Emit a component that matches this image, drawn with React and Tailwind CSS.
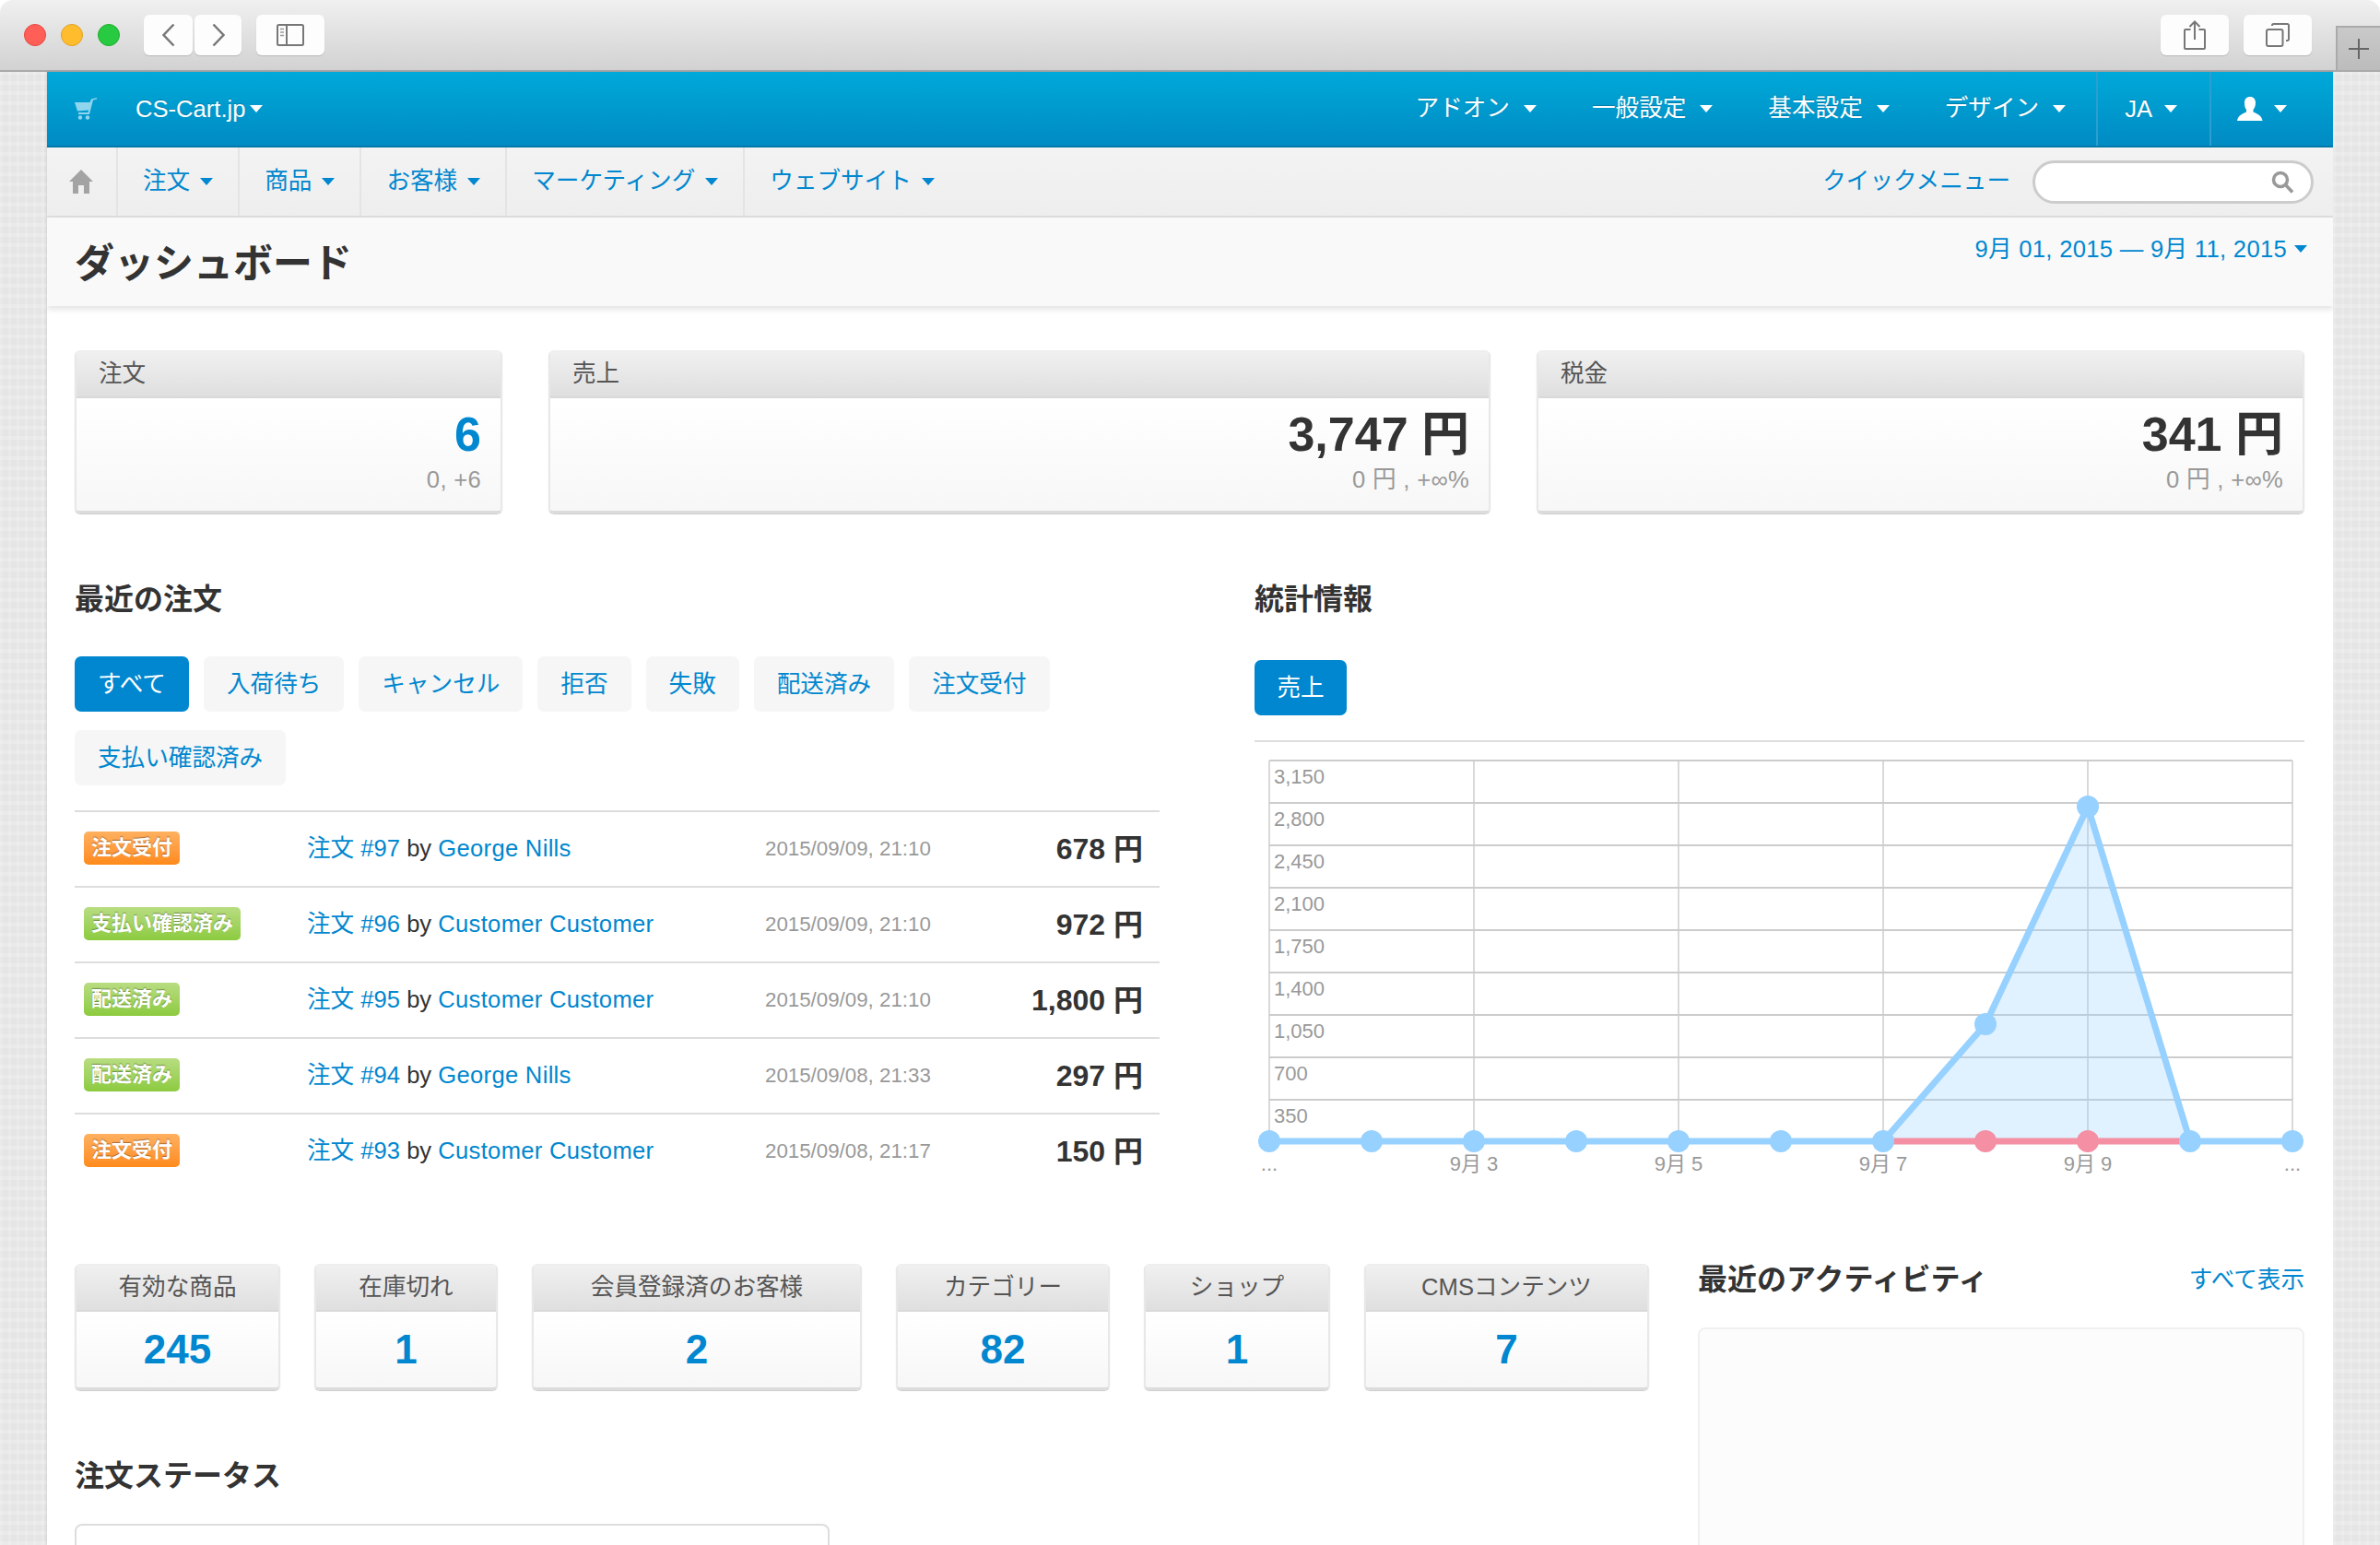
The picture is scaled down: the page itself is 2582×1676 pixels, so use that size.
import React from 'react';

const Caret = () => <span className="inline-block w-0 h-0 border-x-[7px] border-x-transparent border-t-[8px] border-t-current" />;

const sideBg = "w-[51px] shrink-0 bg-[#e5e5e5] bg-[repeating-linear-gradient(0deg,rgba(255,255,255,.2)_0_4px,transparent_4px_11px),repeating-linear-gradient(90deg,rgba(255,255,255,.16)_0_3px,transparent_3px_9px)]";

const ChromeBtn = ({ className = '', children }) => (
  <div className={`h-[44px] flex items-center justify-center rounded-[6px] bg-[#fdfdfd] shadow-[0_1px_1px_rgba(0,0,0,.15)] ${className}`}>
    {children}
  </div>
);

const TopItem = ({ label }) => (
  <div className="flex items-center gap-[15px]">
    <span className="-mt-[3px]">{label}</span>
    <Caret />
  </div>
);

const NavItem = ({ label }) => (
  <div className="flex items-center gap-[11px] px-[27px] h-full border-r-2 border-[#e4e4e4] text-[#0087cf]">
    <span className="-mt-[2px]">{label}</span>
    <Caret />
  </div>
);

const StatCard = ({ title, value, sub, blue }) => (
  <div className="h-[177px] flex flex-col rounded-[6px] overflow-hidden border-x-2 border-t-2 border-b-[3px] border-x-[#e8e8e8] border-t-[#eee] border-b-[#dcdcdc] shadow-[0_1px_1px_rgba(0,0,0,.2)]">
    <div className="h-[50px] shrink-0 flex items-center pl-[24px] bg-linear-to-b from-[#f1f0f0] to-[#dfdfdf] border-b-2 border-[#d9d9d9] text-[#555]">
      <span className="-mt-[2px]">{title}</span>
    </div>
    <div className="flex-1 flex flex-col items-end pr-[21px] bg-linear-to-b from-white to-[#f7f7f7]">
      <div className={`text-[52px] leading-[60px] mt-[9px] font-bold ${blue ? 'text-[#0087cf]' : 'text-[#333]'}`}>{value}</div>
      <div className="text-[#999] leading-[30px] mt-[4px] tracking-[0.3px]">{sub}</div>
    </div>
  </div>
);

const Tab = ({ active, children }) => (
  <div className={`h-[60px] flex items-center px-[25px] rounded-[7px] ${active ? 'bg-[#0087cf] text-white' : 'bg-[#f6f6f6] text-[#0087cf]'}`}>{children}</div>
);

const orders = [
  { st: '注文受付', c: 'o', id: 97, who: 'George Nills', at: '2015/09/09, 21:10', sum: '678 円' },
  { st: '支払い確認済み', c: 'g', id: 96, who: 'Customer Customer', at: '2015/09/09, 21:10', sum: '972 円' },
  { st: '配送済み', c: 'g', id: 95, who: 'Customer Customer', at: '2015/09/09, 21:10', sum: '1,800 円' },
  { st: '配送済み', c: 'g', id: 94, who: 'George Nills', at: '2015/09/08, 21:33', sum: '297 円' },
  { st: '注文受付', c: 'o', id: 93, who: 'Customer Customer', at: '2015/09/08, 21:17', sum: '150 円' },
];

const OrderRow = ({ o }) => (
  <div className="h-[82px] border-t-2 border-[#ddd] grid grid-cols-[252px_497px_1fr_auto] items-center">
    <div className="pl-[10px] -mt-[2px]">
      <span className={`inline-flex items-center h-[36px] px-[8px] rounded-[5px] text-[22px] font-bold text-white [text-shadow:0_-1px_1px_rgba(0,0,0,.35)] bg-linear-to-b ${o.c === 'o' ? 'from-[#ffb05e] to-[#ff8a17]' : 'from-[#b8dd80] to-[#8ccb3e]'}`}>{o.st}</span>
    </div>
    <div className="text-[#333] -mt-[2px]"><span className="text-[#0087cf]">注文 #{o.id}</span> by <span className="text-[#0087cf] tracking-[0.3px]">{o.who}</span></div>
    <div className="text-[22.3px] text-[#999]">{o.at}</div>
    <div className="pr-[18px] text-[32px] font-bold text-[#333]">{o.sum}</div>
  </div>
);

const yLabels = ['3,150', '2,800', '2,450', '2,100', '1,750', '1,400', '1,050', '700', '350'];
const xs = [16, 127, 238, 349, 460, 571, 682, 793, 904, 1015, 1126];
const base = 433;

const Chart = () => (
  <svg width="1139" height="483" className="block fill-[#999] text-[22px]">
    {[20, 66, 112, 158, 204, 250, 296, 342, 388].map((y) => (
      <line key={y} x1="16" x2="1126" y1={y} y2={y} stroke="#ccc" strokeWidth="2" />
    ))}
    {[16, 238, 460, 682, 904, 1126].map((x) => (
      <line key={x} x1={x} x2={x} y1="20" y2={base} stroke="#ccc" strokeWidth="1.5" />
    ))}
    {yLabels.map((l, i) => <text key={l} x="21" y={45 + i * 46}>{l}</text>)}
    {[['9月 3', 238], ['9月 5', 460], ['9月 7', 682], ['9月 9', 904]].map(([l, x]) => (
      <text key={l} x={x} y="465" textAnchor="middle">{l}</text>
    ))}
    <text x="16" y="465" textAnchor="middle">...</text>
    <text x="1126" y="465" textAnchor="middle">...</text>
    <polygon points="682,433 793,306 904,70 1015,433" fill="#97cfff" fillOpacity=".3" />
    <line x1="682" x2="1015" y1={base} y2={base} stroke="#f48fa4" strokeWidth="7" />
    <circle cx="793" cy={base} r="12" fill="#f48fa4" />
    <circle cx="904" cy={base} r="12" fill="#f48fa4" />
    <polyline points="16,433 682,433 793,306 904,70 1015,433 1126,433" fill="none" stroke="#97d1ff" strokeWidth="7" strokeLinejoin="round" />
    {xs.filter((x) => x !== 793 && x !== 904).map((x) => <circle key={x} cx={x} cy={base} r="12" fill="#97d1ff" />)}
    <circle cx="793" cy="306" r="12" fill="#97d1ff" />
    <circle cx="904" cy="70" r="12" fill="#97d1ff" />
  </svg>
);

const counts = [
  ['有効な商品', '245'],
  ['在庫切れ', '1'],
  ['会員登録済のお客様', '2'],
  ['カテゴリー', '82'],
  ['ショップ', '1'],
  ['CMSコンテンツ', '7'],
];

const CountCard = ({ title, value }) => (
  <div className="h-[137px] flex flex-col rounded-[6px] overflow-hidden border-x-2 border-t-2 border-b-[3px] border-x-[#e8e8e8] border-t-[#eee] border-b-[#dcdcdc] shadow-[0_1px_1px_rgba(0,0,0,.2)]">
    <div className="h-[50px] shrink-0 flex items-center justify-center bg-linear-to-b from-[#f1f0f0] to-[#dfdfdf] border-b-2 border-[#d9d9d9] text-[#555]">
      <span className="-mt-[3px]">{title}</span>
    </div>
    <div className="flex-1 flex items-center justify-center text-[44px] font-bold text-[#0087cf] bg-linear-to-b from-white to-[#f7f7f7]">{value}</div>
  </div>
);

export default function App() {
  return (
    <div className="w-[2582px] h-[1676px] overflow-hidden flex flex-col bg-white [font-family:Liberation_Sans,Noto_Sans_CJK_JP,sans-serif] text-[25.6px] leading-[32px]">
      {/* window toolbar */}
      <div className="h-[78px] shrink-0 flex items-start pt-[16px] pl-[26px] rounded-t-[14px] border-b-2 border-[#aaa] bg-linear-to-b from-[#f0f0f0] to-[#d2d2d2]">
        <div className="flex gap-[16px] mt-[10px]">
          <div className="w-[24px] h-[24px] rounded-full bg-[#ff5f57] border border-[#e2463f]" />
          <div className="w-[24px] h-[24px] rounded-full bg-[#ffbd2e] border border-[#dfa123]" />
          <div className="w-[24px] h-[24px] rounded-full bg-[#28ca42] border border-[#1dad2b]" />
        </div>
        <ChromeBtn className="w-[53px] ml-[26px]">
          <svg width="16" height="26" viewBox="0 0 16 26" fill="none" stroke="#777" strokeWidth="2.5"><path d="M13.5 1.5 2.5 13l11 11.5" /></svg>
        </ChromeBtn>
        <ChromeBtn className="w-[51px] ml-[2px]">
          <svg width="16" height="26" viewBox="0 0 16 26" fill="none" stroke="#777" strokeWidth="2.5"><path d="M2.5 1.5 13.5 13l-11 11.5" /></svg>
        </ChromeBtn>
        <ChromeBtn className="w-[74px] ml-[16px]">
          <svg width="30" height="24" viewBox="0 0 30 24" fill="none" stroke="#777" strokeWidth="2"><rect x="1" y="1" width="28" height="22" rx="1.5" /><path d="M11 1v22" /><path d="M4 5.5h4M4 9h4M4 12.5h4" strokeWidth="1.5" stroke="#999" /></svg>
        </ChromeBtn>
        <ChromeBtn className="w-[74px] ml-auto">
          <svg width="24" height="32" viewBox="0 0 24 32" fill="none" stroke="#777" strokeWidth="2"><path d="M7.5 10H2a1 1 0 0 0-1 1v19a1 1 0 0 0 1 1h20a1 1 0 0 0 1-1V11a1 1 0 0 0-1-1h-5.5" /><path d="M12 21V1.5M6.5 7 12 1.5 17.500 7" /></svg>
        </ChromeBtn>
        <ChromeBtn className="w-[74px] ml-[16px]">
          <svg width="26" height="26" viewBox="0 0 26 26" fill="none" stroke="#777" strokeWidth="2"><rect x="1" y="7" width="17.500" height="18" rx="2" /><path d="M7 3V2.500A1.500 1.500 0 0 1 8.500 1H23.500A1.500 1.500 0 0 1 25 2.500V17.500A1.500 1.500 0 0 1 23.500 19H22" /></svg>
        </ChromeBtn>
        <div className="w-[48px] h-[48px] ml-[26px] mt-[12px] flex items-center justify-center border-l-2 border-t-2 border-[#aaa] bg-linear-to-b from-[#c9c9c9] to-[#bcbcbc]">
          <svg width="24" height="24" viewBox="0 0 24 24" stroke="#666" strokeWidth="2"><path d="M12 1v22M1 12h22" /></svg>
        </div>
      </div>

      <div className="flex-1 min-h-0 flex">
        <div className={sideBg} />
        <div className="flex-1 min-w-0 flex flex-col overflow-hidden shadow-[0_0_3px_rgba(0,0,0,.15)]">
          {/* blue top bar */}
          <div className="h-[82px] shrink-0 flex items-center border-b-2 border-[#0079a8] bg-linear-to-b from-[#00a9d9] to-[#008bc3] text-white [text-shadow:0_-1px_0_rgba(0,0,0,.2)]">
            <svg width="24" height="24" viewBox="0 0 24 24" fill="#8fd5ee" className="ml-[30px]"><path d="M0 5h16.500L18 1.500 24 0v1.500l-4 1L16 18H4v-2h10.500L15 13.500 3 14.500z" /><circle cx="6" cy="21.500" r="2.200" /><circle cx="14" cy="21.500" r="2.200" /></svg>
            <div className="ml-[42px] flex items-center gap-[5px]">
              <span>CS-Cart.jp</span>
              <Caret />
            </div>
            <div className="ml-auto flex items-center gap-[60px] pr-[33px]">
              <TopItem label="アドオン" />
              <TopItem label="一般設定" />
              <TopItem label="基本設定" />
              <TopItem label="デザイン" />
            </div>
            <div className="h-full flex items-center gap-[13px] pl-[29px] pr-[35px] border-l-2 border-[#2b9fd0]">
              <span>JA</span>
              <Caret />
            </div>
            <div className="h-full flex items-center gap-[12px] pl-[28px] pr-[50px] border-l-2 border-[#2b9fd0]">
              <svg width="28" height="26" viewBox="0 0 28 26" fill="#fff"><path d="M14 0c3.800 0 6 2.500 6 6.500 0 3-1 5.500-2.500 7.500v2.500c3 1.500 9 3 10 9.500H0c1-6.500 7-8 10-9.500V14C8.500 12 8 9.500 8 6.500 8 2.500 10.200 0 14 0z" /></svg>
              <Caret />
            </div>
          </div>

          {/* grey menu */}
          <div className="h-[76px] shrink-0 flex items-center border-b-2 border-[#ddd] bg-linear-to-b from-[#f3f3f3] to-[#eee]">
            <div className="w-[77px] h-full flex items-center pl-[24px] border-r-2 border-[#e4e4e4]">
              <svg width="26" height="26" viewBox="0 0 26 26" fill="#a3a3a3"><path d="M13 0 26 13h-4v13h-6v-9h-6v9H4V13H0z" /></svg>
            </div>
            <NavItem label="注文" />
            <NavItem label="商品" />
            <NavItem label="お客様" />
            <NavItem label="マーケティング" />
            <div className="flex items-center gap-[11px] pl-[27px] text-[#0087cf]">
              <span className="-mt-[2px]">ウェブサイト</span>
              <Caret />
            </div>
            <div className="ml-auto text-[#0087cf] -mt-[2px]">クイックメニュー</div>
            <div className="w-[305px] h-[47px] ml-[24px] mr-[21px] flex items-center justify-end pr-[18px] rounded-full bg-white border-[3px] border-[#ccc]">
              <svg width="25" height="25" viewBox="0 0 25 25" fill="none" stroke="#999" strokeWidth="3.500"><circle cx="10" cy="10" r="7.500" /><path d="m15.500 15.500 7.500 8" /></svg>
            </div>
          </div>

          {/* page title */}
          <div className="h-[96px] shrink-0 flex items-start justify-between pl-[30px] pr-[28px] bg-[#f9f9f9] shadow-[0_4px_6px_rgba(0,0,0,.1)]">
            <h1 className="mt-[25px] text-[43px] leading-[50px] font-bold text-[#333]">ダッシュボード</h1>
            <div className="mt-[18px] flex items-center gap-[8px] text-[#0087cf]">
              <span className="tracking-[0.3px]">9月 01, 2015 — 9月 11, 2015</span>
              <Caret />
            </div>
          </div>

          <div className="pl-[30px] pr-[31px] pt-[48px]">
            <div className="grid grid-cols-[464px_1022px_1fr] gap-[50px]">
              <StatCard title="注文" value="6" sub="0, +6" blue />
              <StatCard title="売上" value="3,747 円" sub="0 円 , +∞%" />
              <StatCard title="税金" value="341 円" sub="0 円 , +∞%" />
            </div>

            <div className="flex gap-[103px] mt-[73px]">
              <div className="w-[1177px] shrink-0">
                <h2 className="text-[32px] leading-[40px] font-bold text-[#333]">最近の注文</h2>
                <div className="flex flex-wrap gap-x-[16px] gap-y-[20px] mt-[42px] mb-[27px]">
                  <Tab active>すべて</Tab>
                  <Tab>入荷待ち</Tab>
                  <Tab>キャンセル</Tab>
                  <Tab>拒否</Tab>
                  <Tab>失敗</Tab>
                  <Tab>配送済み</Tab>
                  <Tab>注文受付</Tab>
                  <Tab>支払い確認済み</Tab>
                </div>
                {orders.map((o) => <OrderRow key={o.id} o={o} />)}
              </div>
              <div className="flex-1 min-w-0">
                <h2 className="text-[32px] leading-[40px] font-bold text-[#333]">統計情報</h2>
                <div className="mt-[46px] w-[100px] h-[60px] flex items-center justify-center rounded-[7px] bg-[#0087cf] text-white">売上</div>
                <div className="mt-[27px] border-t-2 border-[#ddd]">
                  <Chart />
                </div>
              </div>
            </div>

            <div className="flex gap-[54px] mt-[82px]">
              <div className="w-[1707px] shrink-0">
                <div className="grid grid-cols-[223px_199px_358px_232px_202px_309px] gap-[37px]">
                  {counts.map(([t, v]) => <CountCard key={t} title={t} value={v} />)}
                </div>
                <h2 className="mt-[73px] text-[32px] leading-[40px] font-bold text-[#333]">注文ステータス</h2>
                <div className="mt-[32px] w-[819px] h-[120px] rounded-[8px] border-2 border-[#ddd] bg-white" />
              </div>
              <div className="flex-1 min-w-0 -mt-[3px]">
                <div className="flex items-center justify-between h-[40px]">
                  <h2 className="text-[32px] leading-[40px] font-bold text-[#333]">最近のアクティビティ</h2>
                  <span className="text-[#0087cf] -mt-[1px]">すべて表示</span>
                </div>
                <div className="mt-[32px] h-[300px] rounded-[8px] border-2 border-[#f0f0f0] bg-[#fcfcfc]" />
              </div>
            </div>
          </div>
        </div>
        <div className={sideBg} />
      </div>
    </div>
  );
}
